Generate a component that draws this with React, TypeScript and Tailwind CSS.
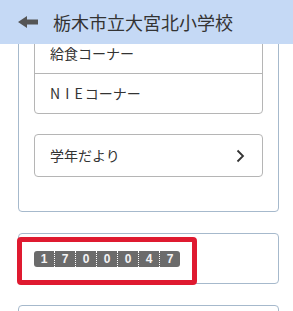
import React from "react";

const font = { fontFamily: '"Noto Sans CJK JP", "Noto Sans", sans-serif' };

function Counter() {
  const digits = ["1", "7", "0", "0", "0", "4", "7"];
  return (
    <div className="flex h-[16px] w-[146px] overflow-hidden rounded-[3px] bg-[#6b6b6b]">
      {digits.map((d, i) => (
        <div
          key={i}
          className={`flex flex-1 items-center justify-center text-[12px] font-bold leading-none text-[#f4f4f4] ${
            i > 0 ? "border-l border-dotted border-white" : ""
          }`}
          style={{ fontFamily: '"Liberation Sans", Arial, sans-serif' }}
        >
          {d}
        </div>
      ))}
    </div>
  );
}

export default function App() {
  return (
    <div className="relative h-[311px] w-[293px] overflow-hidden bg-white text-[#333]" style={font}>
      <header className="absolute left-0 top-0 z-10 flex h-[44px] w-full items-center bg-[#c5d9f5]">
        <svg width="20" height="12" viewBox="0 0 20 12" className="ml-[18px]">
          <polygon points="0,6 9,0 9,3.5 20,3.5 20,8.5 9,8.5 9,12" fill="#555" />
        </svg>
        <span className="ml-[15px] text-[18px] leading-none text-[#333]">
          栃木市立大宮北小学校
        </span>
      </header>

      <div className="pl-[18px] pr-[14px] pt-[16px]">
        <div className="rounded-[4px] border border-[#a6b9cc] px-[15px] pb-[34px] pt-[15px]">
          <div className="rounded-[4px] border border-[#b5b5b5]">
            <div className="flex h-[40px] items-center px-[15px] text-[14px]">給食コーナー</div>
            <div className="flex h-[40px] items-center border-t border-[#b5b5b5] px-[15px] text-[14px]">
              <span className="tracking-[1px]">N I E</span>
              <span className="ml-[1px]">コーナー</span>
            </div>
          </div>
          <div className="mt-[20px] flex h-[43px] items-center justify-between rounded-[4px] border border-[#b5b5b5] pl-[15px] pr-[17px] text-[14px]">
            <span>学年だより</span>
            <svg width="9" height="14" viewBox="0 0 9 14">
              <polyline points="1.5,1.5 7,7 1.5,12.5" fill="none" stroke="#333" strokeWidth="1.8" />
            </svg>
          </div>
        </div>

        <div className="relative mt-[21px] flex h-[51px] items-center rounded-[4px] border border-[#a6b9cc] pl-[15px]">
          <Counter />
          <div className="pointer-events-none absolute left-[-2px] top-[3px] h-[48px] w-[180px] rounded-[4px] border-[5px] border-[#df1a30]" />
        </div>

        <div className="mt-[21px] h-[40px] rounded-[4px] border border-[#a6b9cc]" />
      </div>
    </div>
  );
}
